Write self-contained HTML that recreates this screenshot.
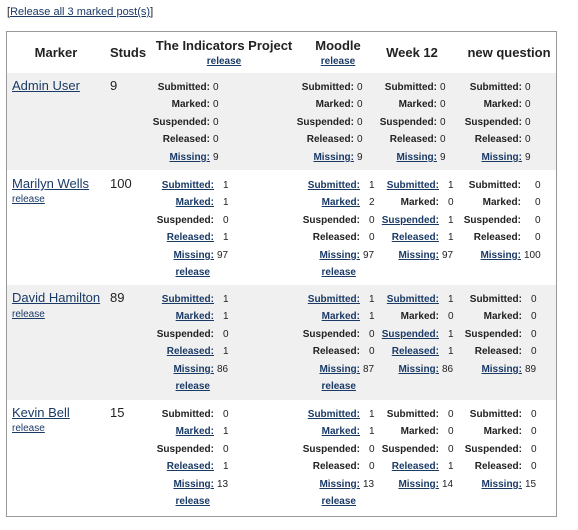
<!DOCTYPE html>
<html><head><meta charset="utf-8"><style>
body{margin:0;width:578px;height:530px;background:#fff;font-family:"Liberation Sans",Arial,sans-serif;color:#222;position:relative;overflow:hidden}
a{color:#1a3a66;text-decoration:underline}
.top{position:absolute;left:7px;top:6px;font-size:11px}
.frame{position:absolute;left:6px;top:31px;width:549px;height:484px;border:1px solid #999}
.g{position:absolute;left:7px;width:549px;background:#f0f0f0}
.h{position:absolute;font-weight:bold;font-size:13px;text-align:center;width:160px}
.hr{position:absolute;font-weight:bold;font-size:10px;text-align:center;width:160px}
.name{position:absolute;left:12px;font-size:13px}
.rel{position:absolute;left:12px;font-size:10px}
.num{position:absolute;left:110px;font-size:13px}
table.s{position:absolute;border-collapse:collapse;font-size:10px;font-weight:bold}
table.s td{padding:0;line-height:17.4px;height:17.4px;white-space:nowrap}
table.s td.l{width:150px;text-align:right}
table.s td.v{font-weight:normal;padding-left:3px}
table.s td.w{font-weight:normal;padding-left:9px}
</style></head><body>
<div class="top">[<a>Release all 3 marked post(s)</a>]</div>
<div class="g" style="top:73px;height:97px"></div>
<div class="g" style="top:285px;height:115px"></div>
<div class="frame"></div>

<div class="h" style="left:-24px;top:45px">Marker</div>
<div class="h" style="left:48px;top:45px">Studs</div>
<div class="h" style="left:144px;top:38px">The Indicators Project</div>
<div class="hr" style="left:144px;top:56px"><a>release</a></div>
<div class="h" style="left:258px;top:38px">Moodle</div>
<div class="hr" style="left:258px;top:56px"><a>release</a></div>
<div class="h" style="left:332px;top:45px">Week 12</div>
<div class="h" style="left:429px;top:45px">new question</div>

<!-- Row 1 -->
<div class="name" style="top:78px"><a>Admin User</a></div>
<div class="num" style="top:78px">9</div>
<table class="s" style="left:60px;top:79px"><tr><td class="l">Submitted:</td><td class="v">0</td></tr><tr><td class="l">Marked:</td><td class="v">0</td></tr><tr><td class="l">Suspended:</td><td class="v">0</td></tr><tr><td class="l">Released:</td><td class="v">0</td></tr><tr><td class="l"><a>Missing:</a></td><td class="v">9</td></tr></table>
<table class="s" style="left:204px;top:79px"><tr><td class="l">Submitted:</td><td class="v">0</td></tr><tr><td class="l">Marked:</td><td class="v">0</td></tr><tr><td class="l">Suspended:</td><td class="v">0</td></tr><tr><td class="l">Released:</td><td class="v">0</td></tr><tr><td class="l"><a>Missing:</a></td><td class="v">9</td></tr></table>
<table class="s" style="left:287px;top:79px"><tr><td class="l">Submitted:</td><td class="v">0</td></tr><tr><td class="l">Marked:</td><td class="v">0</td></tr><tr><td class="l">Suspended:</td><td class="v">0</td></tr><tr><td class="l">Released:</td><td class="v">0</td></tr><tr><td class="l"><a>Missing:</a></td><td class="v">9</td></tr></table>
<table class="s" style="left:372px;top:79px"><tr><td class="l">Submitted:</td><td class="v">0</td></tr><tr><td class="l">Marked:</td><td class="v">0</td></tr><tr><td class="l">Suspended:</td><td class="v">0</td></tr><tr><td class="l">Released:</td><td class="v">0</td></tr><tr><td class="l"><a>Missing:</a></td><td class="v">9</td></tr></table>

<!-- Row 2 -->
<div class="name" style="top:176px"><a>Marilyn Wells</a></div>
<div class="rel" style="top:194px"><a>release</a></div>
<div class="num" style="top:176px">100</div>
<table class="s" style="left:60px;top:177px"><tr><td class="l"><a>Submitted:</a></td><td class="w">1</td></tr><tr><td class="l"><a>Marked:</a></td><td class="w">1</td></tr><tr><td class="l">Suspended:</td><td class="w">0</td></tr><tr><td class="l"><a>Released:</a></td><td class="w">1</td></tr><tr><td class="l"><a>Missing:</a></td><td class="v">97</td></tr><tr><td class="l" style="padding-right:4px"><a>release</a></td><td></td></tr></table>
<table class="s" style="left:206px;top:177px"><tr><td class="l"><a>Submitted:</a></td><td class="w">1</td></tr><tr><td class="l"><a>Marked:</a></td><td class="w">2</td></tr><tr><td class="l">Suspended:</td><td class="w">0</td></tr><tr><td class="l">Released:</td><td class="w">0</td></tr><tr><td class="l"><a>Missing:</a></td><td class="v">97</td></tr><tr><td class="l" style="padding-right:4px"><a>release</a></td><td></td></tr></table>
<table class="s" style="left:289px;top:177px"><tr><td class="l"><a>Submitted:</a></td><td class="w">1</td></tr><tr><td class="l">Marked:</td><td class="w">0</td></tr><tr><td class="l"><a>Suspended:</a></td><td class="w">1</td></tr><tr><td class="l"><a>Released:</a></td><td class="w">1</td></tr><tr><td class="l"><a>Missing:</a></td><td class="v">97</td></tr></table>
<table class="s" style="left:371px;top:177px"><tr><td class="l">Submitted:</td><td class="w" style="padding-left:14px">0</td></tr><tr><td class="l">Marked:</td><td class="w" style="padding-left:14px">0</td></tr><tr><td class="l">Suspended:</td><td class="w" style="padding-left:14px">0</td></tr><tr><td class="l">Released:</td><td class="w" style="padding-left:14px">0</td></tr><tr><td class="l"><a>Missing:</a></td><td class="v">100</td></tr></table>

<!-- Row 3 -->
<div class="name" style="top:290px"><a>David Hamilton</a></div>
<div class="rel" style="top:309px"><a>release</a></div>
<div class="num" style="top:290px">89</div>
<table class="s" style="left:60px;top:291px"><tr><td class="l"><a>Submitted:</a></td><td class="w">1</td></tr><tr><td class="l"><a>Marked:</a></td><td class="w">1</td></tr><tr><td class="l">Suspended:</td><td class="w">0</td></tr><tr><td class="l"><a>Released:</a></td><td class="w">1</td></tr><tr><td class="l"><a>Missing:</a></td><td class="v">86</td></tr><tr><td class="l" style="padding-right:4px"><a>release</a></td><td></td></tr></table>
<table class="s" style="left:206px;top:291px"><tr><td class="l"><a>Submitted:</a></td><td class="w">1</td></tr><tr><td class="l"><a>Marked:</a></td><td class="w">1</td></tr><tr><td class="l">Suspended:</td><td class="w">0</td></tr><tr><td class="l">Released:</td><td class="w">0</td></tr><tr><td class="l"><a>Missing:</a></td><td class="v">87</td></tr><tr><td class="l" style="padding-right:4px"><a>release</a></td><td></td></tr></table>
<table class="s" style="left:289px;top:291px"><tr><td class="l"><a>Submitted:</a></td><td class="w">1</td></tr><tr><td class="l">Marked:</td><td class="w">0</td></tr><tr><td class="l"><a>Suspended:</a></td><td class="w">1</td></tr><tr><td class="l"><a>Released:</a></td><td class="w">1</td></tr><tr><td class="l"><a>Missing:</a></td><td class="v">86</td></tr></table>
<table class="s" style="left:372px;top:291px"><tr><td class="l">Submitted:</td><td class="w">0</td></tr><tr><td class="l">Marked:</td><td class="w">0</td></tr><tr><td class="l">Suspended:</td><td class="w">0</td></tr><tr><td class="l">Released:</td><td class="w">0</td></tr><tr><td class="l"><a>Missing:</a></td><td class="v">89</td></tr></table>

<!-- Row 4 -->
<div class="name" style="top:405px"><a>Kevin Bell</a></div>
<div class="rel" style="top:423px"><a>release</a></div>
<div class="num" style="top:405px">15</div>
<table class="s" style="left:60px;top:406px"><tr><td class="l">Submitted:</td><td class="w">0</td></tr><tr><td class="l"><a>Marked:</a></td><td class="w">1</td></tr><tr><td class="l">Suspended:</td><td class="w">0</td></tr><tr><td class="l"><a>Released:</a></td><td class="w">1</td></tr><tr><td class="l"><a>Missing:</a></td><td class="v">13</td></tr><tr><td class="l" style="padding-right:4px"><a>release</a></td><td></td></tr></table>
<table class="s" style="left:206px;top:406px"><tr><td class="l"><a>Submitted:</a></td><td class="w">1</td></tr><tr><td class="l"><a>Marked:</a></td><td class="w">1</td></tr><tr><td class="l">Suspended:</td><td class="w">0</td></tr><tr><td class="l">Released:</td><td class="w">0</td></tr><tr><td class="l"><a>Missing:</a></td><td class="v">13</td></tr><tr><td class="l" style="padding-right:4px"><a>release</a></td><td></td></tr></table>
<table class="s" style="left:289px;top:406px"><tr><td class="l">Submitted:</td><td class="w">0</td></tr><tr><td class="l">Marked:</td><td class="w">0</td></tr><tr><td class="l">Suspended:</td><td class="w">0</td></tr><tr><td class="l"><a>Released:</a></td><td class="w">1</td></tr><tr><td class="l"><a>Missing:</a></td><td class="v">14</td></tr></table>
<table class="s" style="left:372px;top:406px"><tr><td class="l">Submitted:</td><td class="w">0</td></tr><tr><td class="l">Marked:</td><td class="w">0</td></tr><tr><td class="l">Suspended:</td><td class="w">0</td></tr><tr><td class="l">Released:</td><td class="w">0</td></tr><tr><td class="l"><a>Missing:</a></td><td class="v">15</td></tr></table>
</body></html>
